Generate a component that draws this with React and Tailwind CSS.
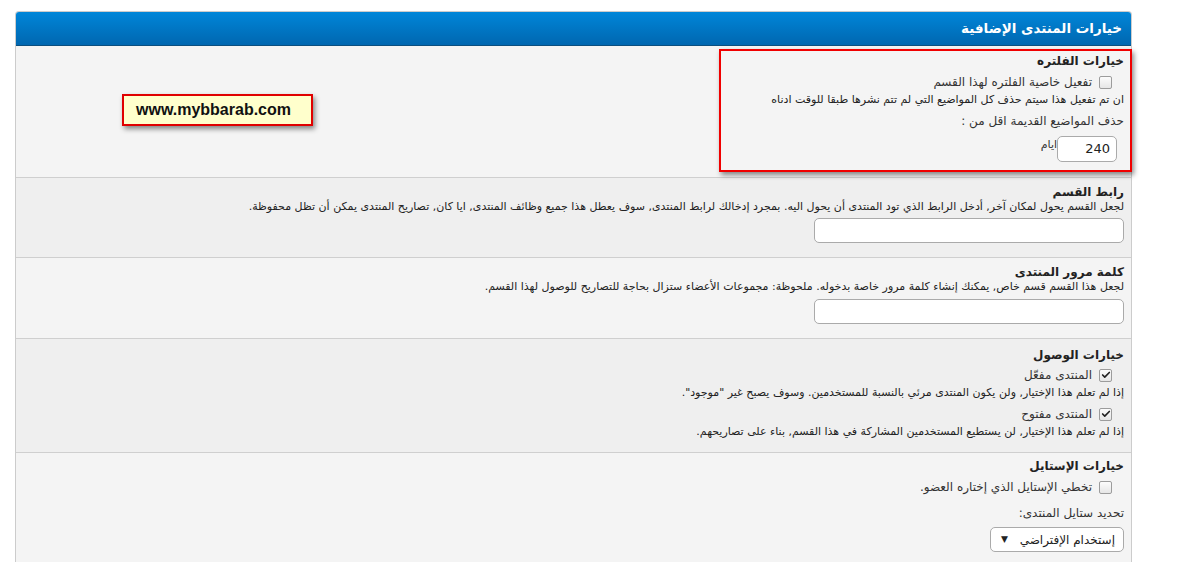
import { Check } from "lucide-react";

const Box = ({ checked }) => (
  <span className="inline-flex h-[13px] w-[13px] shrink-0 items-center justify-center rounded-[2px] border border-[#9c9c9c] bg-gradient-to-b from-[#fcfcfc] to-[#e6e6e6]">
    {checked && <Check className="size-[10px] text-[#222]" strokeWidth={4} />}
  </span>
);

const Row = ({ alt, className = "", children }) => (
  <div
    className={`border-b border-[#cfcfcf] px-[7px] ${alt ? "bg-[#efefef]" : "bg-[#f4f4f4]"} ${className}`}
  >
    {children}
  </div>
);

const Title = ({ children }) => (
  <div className="text-[12px] font-bold leading-[15px] text-[#222]">{children}</div>
);

const Desc = ({ children }) => (
  <div className="text-[11px] leading-[14px] text-[#222]">{children}</div>
);

export default function App() {
  return (
    <div
      className="relative h-[562px] w-[1199px] overflow-hidden bg-white pl-[15px] pt-[11px]"
      style={{ fontFamily: '"DejaVu Sans", sans-serif' }}
    >
      <div dir="rtl" className="w-[1117px] rounded-t-[4px] border-x border-t border-[#cccccc]">
        <div className="flex h-[34px] items-center rounded-t-[3px] border-b border-[#0b4f7f] bg-gradient-to-b from-[#0086d9] to-[#0067b0] px-[9px] text-[13.5px] font-bold text-white">
          خيارات المنتدى الإضافية
        </div>

        <Row className="h-[132px] pt-[8px]">
          <Title>خيارات الفلتره</Title>
          <div className="mt-[4px] flex items-center gap-[7px] pr-[12px] text-[12px] text-[#333]">
            <Box />
            <span>تفعيل خاصية الفلتره لهذا القسم</span>
          </div>
          <div className="mt-[2px] text-[11px] leading-[14px] text-[#222]">
            ان تم تفعيل هذا سيتم حذف كل المواضيع التي لم تتم نشرها طبقا للوقت ادناه
          </div>
          <div className="mt-[5px] text-[12px] text-[#333]">حذف المواضيع القديمة اقل من :</div>
          <div className="mt-[6px] flex items-start pr-[7px]">
            <div className="flex h-[26px] w-[60px] items-center rounded-[5px] border border-[#aaa] bg-white px-[6px] text-[13px] text-[#222]">
              240
            </div>
            <span className="mt-[1px] text-[11px] text-[#333]">ايام</span>
          </div>
        </Row>

        <Row alt className="h-[80px] pt-[7px]">
          <Title>رابط القسم</Title>
          <Desc>
            لجعل القسم يحول لمكان آخر, أدخل الرابط الذي تود المنتدى أن يحول اليه. بمجرد إدخالك لرابط المنتدى, سوف يعطل هذا جميع وظائف المنتدى, ايا كان, تصاريح المنتدى يمكن أن تظل محفوظة.
          </Desc>
          <div className="mt-[4px] h-[25px] w-[310px] rounded-[5px] border border-[#aaa] bg-white" />
        </Row>

        <Row className="h-[81px] pt-[7px]">
          <Title>كلمة مرور المنتدى</Title>
          <Desc>
            لجعل هذا القسم قسم خاص, يمكنك إنشاء كلمة مرور خاصة بدخوله. ملحوظة: مجموعات الأعضاء ستزال بحاجة للتصاريح للوصول لهذا القسم.
          </Desc>
          <div className="mt-[5px] h-[25px] w-[310px] rounded-[5px] border border-[#aaa] bg-white" />
        </Row>

        <Row alt className="h-[114px] pt-[9px]">
          <Title>خيارات الوصول</Title>
          <div className="mt-[3px] flex items-center gap-[7px] pr-[12px] text-[12px] text-[#333]">
            <Box checked />
            <span>المنتدى مفعّل</span>
          </div>
          <div className="mt-[2px]">
            <Desc>إذا لم تعلم هذا الإختيار, ولن يكون المنتدى مرئي بالنسبة للمستخدمين. وسوف يصبح غير "موجود".</Desc>
          </div>
          <div className="mt-[5px] flex items-center gap-[7px] pr-[12px] text-[12px] text-[#333]">
            <Box checked />
            <span>المنتدى مفتوح</span>
          </div>
          <div className="mt-[2px]">
            <Desc>إذا لم تعلم هذا الإختيار, لن يستطيع المستخدمين المشاركة في هذا القسم, بناء على تصاريحهم.</Desc>
          </div>
        </Row>

        <Row className="h-[120px] pt-[6px]">
          <Title>خيارات الإستايل</Title>
          <div className="mt-[4px] flex items-center gap-[7px] pr-[12px] text-[12px] text-[#333]">
            <Box />
            <span>تخطي الإستايل الذي إختاره العضو.</span>
          </div>
          <div className="mt-[8px] text-[12px] text-[#333]">تحديد ستايل المنتدى:</div>
          <div className="mt-[5px] flex h-[25px] w-[134px] items-center justify-between rounded-[5px] border border-[#aaa] bg-white pl-[10px] pr-[8px] text-[12px] text-[#222]">
            <span>إستخدام الإفتراضي</span>
            <span className="text-[9px]">▼</span>
          </div>
        </Row>
      </div>

      <div className="absolute left-[719px] top-[49px] h-[123px] w-[413px] border-2 border-[#f00000] shadow-[2px_3px_5px_rgba(0,0,0,0.45)]" />

      <div className="absolute left-[122px] top-[94px] flex h-[32px] w-[191px] items-center border-2 border-[#e00000] bg-[#ffffcc] pl-[12px] text-[16px] font-bold text-[#111] shadow-[2px_3px_5px_rgba(0,0,0,0.45)]" style={{ fontFamily: '"Liberation Sans", Arial, sans-serif' }}>
        www.mybbarab.com
      </div>
    </div>
  );
}
